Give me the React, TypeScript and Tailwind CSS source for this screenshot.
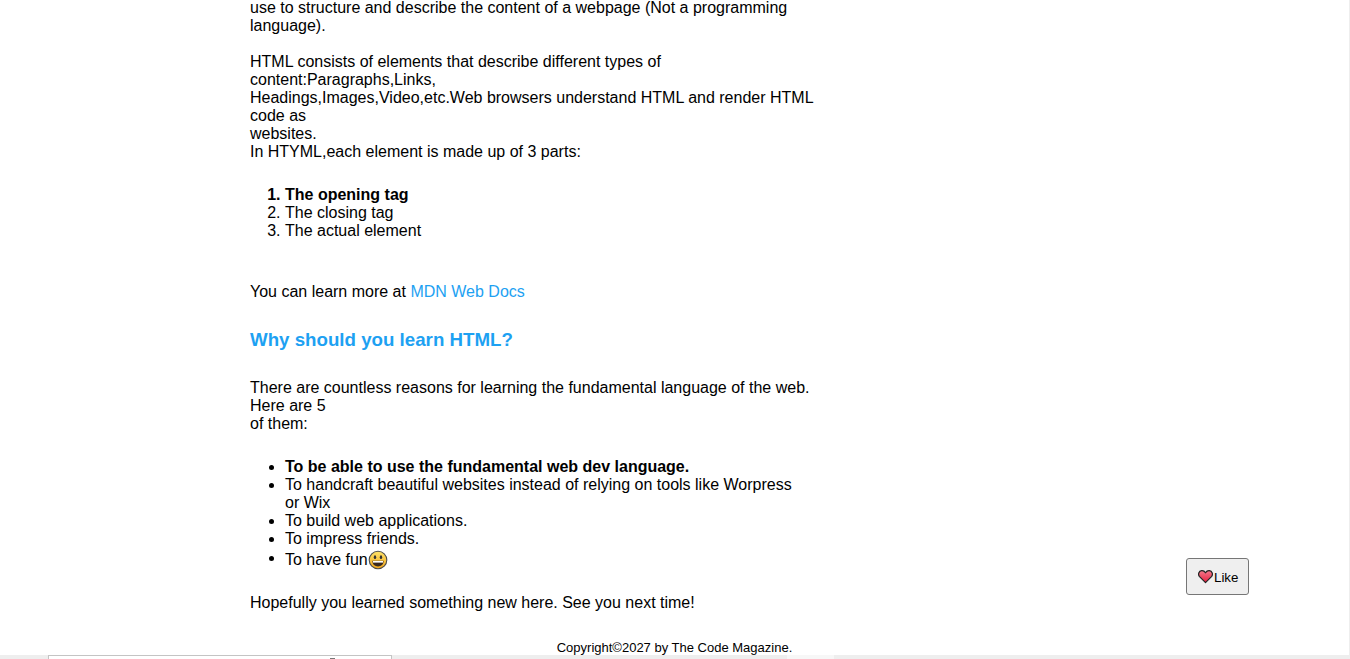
export default function App() {
  return (
    <div className="relative h-[659px] w-[1350px] overflow-hidden bg-white text-black font-['Liberation_Sans',Arial,sans-serif] flex flex-col">
      <div className="h-[655px] flex flex-col overflow-hidden border-r border-[#eeeeee]">
        <main className="ml-[250px] w-[584px] -mt-[1px] text-base leading-[18px]">
          <p>
            use to structure and describe the content of a webpage (Not a programming
            <br />
            language).
            <br />
            <br />
            HTML consists of elements that describe different types of
            <br />
            content:Paragraphs,Links,
            <br />
            Headings,Images,Video,etc.Web browsers understand HTML and render HTML code as
            <br />
            websites.
            <br />
            In HTYML,each element is made up of 3 parts:
          </p>
          <ol className="list-decimal pl-[35px] mt-[25px]">
            <li className="font-bold">The opening tag</li>
            <li>The closing tag</li>
            <li>The actual element</li>
          </ol>
          <p className="mt-[43px]">
            You can learn more at <a className="text-[#1da1f2]">MDN Web Docs</a>
          </p>
          <h3 className="mt-[28px] text-[18.72px] leading-[21px] font-bold text-[#1da1f2]">Why should you learn HTML?</h3>
          <p className="mt-[29px]">
            There are countless reasons for learning the fundamental language of the web. Here are 5
            <br />
            of them:
          </p>
          <ul className="list-disc pl-[35px] pr-[30px] mt-[25px]">
            <li className="font-bold">To be able to use the fundamental web dev language.</li>
            <li>To handcraft beautiful websites instead of relying on tools like Worpress or Wix</li>
            <li>To build web applications.</li>
            <li>To impress friends.</li>
            <li className="pt-[1px]">
              <span className="inline-flex items-center h-[21px] align-top">
                To have fun
                <svg width="20" height="20" viewBox="0 0 20 20" className="mt-[1px]">
                  <defs>
                    <linearGradient id="f" x1="0" y1="0" x2="0" y2="1">
                      <stop offset="0" stopColor="#fde26a" />
                      <stop offset="1" stopColor="#f4a91d" />
                    </linearGradient>
                  </defs>
                  <circle cx="10" cy="10" r="8.8" fill="url(#f)" stroke="#4d4d4d" strokeWidth="1.1" />
                  <ellipse cx="7" cy="7.2" rx="1.2" ry="1.9" fill="#333" />
                  <ellipse cx="13" cy="7.2" rx="1.2" ry="1.9" fill="#333" />
                  <path d="M4.4 10.8h11.2c0 3.6-2.4 5.7-5.6 5.7s-5.6-2.1-5.6-5.7z" fill="#3a2a20" />
                  <path d="M5 11h10v1.6H5z" fill="#fff" />
                </svg>
              </span>
            </li>
          </ul>
          <p className="mt-[24px]">Hopefully you learned something new here. See you next time!</p>
        </main>
        <footer className="mt-[28px] text-center text-[13px] leading-[15px]">Copyright©2027 by The Code Magazine.</footer>
      </div>
      <div className="h-[4px] flex bg-[#eeeeee]">
        <div className="w-[48px]" />
        <div className="relative w-[344px] bg-white border-t border-x border-[#c4c4c4]">
          <div className="absolute left-[281px] top-[2px] w-[5px] h-[1px] bg-[#777777]" />
        </div>
        <div className="w-[395px]" />
        <div className="w-[47px] bg-[#f7f7f7]" />
      </div>
      <button className="absolute left-[1186px] top-[558px] w-[63px] h-[37px] rounded-[3px] border border-[#767676] bg-[#efefef] flex items-center justify-start pl-[11px] text-[13.33px] leading-none">
        <svg width="15" height="15" viewBox="0 0 16 15" className="shrink-0">
          <defs>
            <linearGradient id="h" x1="0" y1="0" x2="0" y2="1">
              <stop offset="0" stopColor="#f27a8c" />
              <stop offset="1" stopColor="#e8203f" />
            </linearGradient>
          </defs>
          <path d="M8 14 1.6 7.6C-.2 5.6.6 1.4 4 1.2c1.8-.1 3.2.9 4 2.3.8-1.4 2.2-2.4 4-2.3 3.4.2 4.2 4.4 2.4 6.4z" fill="url(#h)" stroke="#222" strokeWidth="1.3" strokeLinejoin="round" />
        </svg>
        <span className="pt-[2px] pl-[1px]">Like</span>
      </button>
    </div>
  );
}
